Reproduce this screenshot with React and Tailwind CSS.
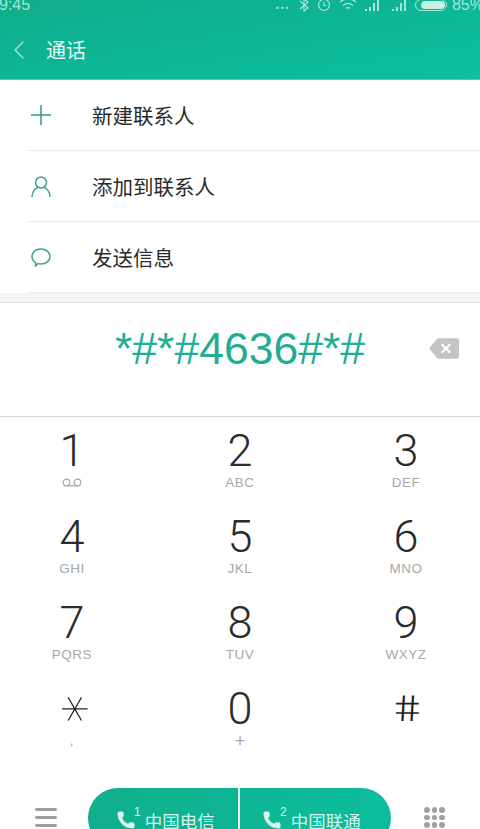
import React from 'react';
import { ChevronLeft, Phone } from 'lucide-react';

const cjk = 'font-["Noto_Sans_CJK_SC",sans-serif]';

function PlusIcon() {
  return (
    <svg width="20" height="20" viewBox="0 0 20 20" fill="none" stroke="#2f9a85" strokeWidth="1.5">
      <path d="M10 0v20M0 10h20" />
    </svg>
  );
}

function PersonIcon() {
  return (
    <svg width="20" height="21" viewBox="0 0 20 21" fill="none" stroke="#3fa28e" strokeWidth="1.5">
      <circle cx="10" cy="6.5" r="5.5" />
      <path d="M1 21c0-5.5 3.5-9 6-9.5M19 21c0-5.5-3.5-9-6-9.5" />
    </svg>
  );
}

function BubbleIcon() {
  return (
    <svg width="20" height="19" viewBox="0 0 20 19" fill="none" stroke="#3fa28e" strokeWidth="1.5">
      <path d="M10 1c5 0 9 3 9 7.500s-4 7.500-9 7.500c-1 0-2-.1-3-.4L4.500 18l.2-3.300C2.500 13.300 1 11.100 1 8.500 1 4 5 1 10 1z" />
    </svg>
  );
}

const menu = [
  { id: 'new', label: '新建联系人', Icon: PlusIcon },
  { id: 'add', label: '添加到联系人', Icon: PersonIcon },
  { id: 'msg', label: '发送信息', Icon: BubbleIcon },
];

const keys = [
  { n: '1', sub: 'vm' },
  { n: '2', sub: 'ABC' },
  { n: '3', sub: 'DEF' },
  { n: '4', sub: 'GHI' },
  { n: '5', sub: 'JKL' },
  { n: '6', sub: 'MNO' },
  { n: '7', sub: 'PQRS' },
  { n: '8', sub: 'TUV' },
  { n: '9', sub: 'WXYZ' },
  { n: '*', sub: ',' },
  { n: '0', sub: '+' },
  { n: '#', sub: '' },
];

function Voicemail() {
  return (
    <svg width="22" height="10" viewBox="0 0 22 10" fill="none" stroke="#a8a8a8" strokeWidth="1.2">
      <circle cx="5.5" cy="4.5" r="3.3" />
      <circle cx="16.5" cy="4.5" r="3.3" />
      <path d="M5.5 7.800h11" />
    </svg>
  );
}

function StatusIcons() {
  return (
    <div className="flex items-center text-[#a5e6d5]">
      <span className="text-[14px] leading-none font-bold tracking-[1px] mt-[-2px]">...</span>
      <svg width="10" height="14" viewBox="0 0 10 14" fill="none" stroke="currentColor" strokeWidth="1.2" className="ml-[9px]">
        <path d="M1 3l8 7-4 3V1l4 3-8 7" />
      </svg>
      <svg width="14" height="14" viewBox="0 0 14 14" fill="none" stroke="currentColor" strokeWidth="1.2" className="ml-[8px]">
        <circle cx="7" cy="7" r="5.5" />
        <path d="M7 4v3.500h2.500" />
      </svg>
      <svg width="18" height="14" viewBox="0 0 18 14" fill="none" stroke="currentColor" strokeWidth="1.3" className="ml-[8px]">
        <path d="M1 4c4-4 12-4 16 0M4 7.500c3-2.500 7-2.500 10 0M7 10.500c1-1 3-1 4 0" />
      </svg>
      <svg width="15" height="12" viewBox="0 0 15 12" fill="currentColor" className="ml-[8px]">
        <path d="M0 10h2v2H0zM4 8h2v4H4zM8 4h2v8H8zM12 1h2v11h-2z" />
      </svg>
      <svg width="15" height="12" viewBox="0 0 15 12" fill="currentColor" className="ml-[12px]">
        <path d="M0 10h2v2H0zM4 8h2v4H4zM8 4h2v8H8zM12 1h2v11h-2z" />
      </svg>
      <div className="ml-[8px] w-[32px] h-[12px] rounded-full border border-[#a5e6d5] p-[1px] pl-[5px]">
        <div className="h-full rounded-full bg-[#c8f0e5]" />
      </div>
      <span className="ml-[5px] text-[16px] leading-none">85%</span>
    </div>
  );
}

export default function App() {
  return (
    <div className='w-[480px] h-[829px] overflow-hidden bg-white font-["Liberation_Sans",sans-serif]'>
      <header className="h-[80px] bg-gradient-to-br from-[#10ac8a] via-[#0cb696] to-[#0cc0a0] border-b border-[#4fcdb5]">
        <div className="flex items-center justify-between h-[10px] text-[#a5e6d5] w-[485px] ml-[-1px]">
          <span className="text-[16px] leading-none">9:45</span>
          <StatusIcons />
        </div>
        <div className="flex items-center mt-[24px] pl-[3px]">
          <ChevronLeft size={32} strokeWidth={1} className="text-[#a5e6d5]" />
          <span className={`ml-[11px] text-[20px] leading-[24px] text-[#e4f8f3] ${cjk}`}>通话</span>
        </div>
      </header>

      <ul className="h-[213px]">
        {menu.map(({ id, label, Icon }) => (
          <li key={id} className="flex h-[71px] pl-[27px]">
            <div className="flex items-center flex-1 border-b border-[#ececec] pl-[4px]">
              <div className="w-[20px] flex justify-center">
                <Icon />
              </div>
              <span className={`ml-[41px] text-[20.5px] text-[#2a2a2a] ${cjk}`}>{label}</span>
            </div>
          </li>
        ))}
      </ul>

      <div className="h-[10px] bg-[#f5f5f5] border-b border-[#dedede]" />

      <div className="relative h-[114px] border-b border-[#d8d8d8] flex items-center justify-center">
        <span className="text-[44.5px] leading-none text-[#1fae93] mb-[20px]">*#*#4636#*#</span>
        <svg width="30" height="21" viewBox="0 0 31 21" className="absolute right-[21px] top-[35px]">
          <path d="M9 0h20a2 2 0 0 1 2 2v17a2 2 0 0 1-2 2H9L0 10.500z" fill="#c4c4c4" />
          <path d="M13 6l9 9M22 6l-9 9" stroke="#fff" strokeWidth="2.2" />
        </svg>
      </div>

      <div className="grid grid-cols-[144px_192px_140px] pt-[10px]">
        {keys.map((k) => (
          <div key={k.n} className="h-[86px] flex flex-col items-center">
            {k.n === '*' ? (
              <span className="h-[48px] text-[56px] leading-[48px] text-[#1f1f1f] font-['DejaVu_Sans',sans-serif] font-extralight rotate-90 -translate-x-[7px]">*</span>
            ) : k.n === '#' ? (
              <span className="h-[48px] text-[36px] leading-[48px] text-[#1f1f1f] font-['Roboto',sans-serif] font-light skew-x-[8deg] scale-x-[1.25]">#</span>
            ) : (
              <span className="h-[48px] text-[45px] leading-[48px] text-[#2b2b2b] font-['Roboto',sans-serif] font-light">{k.n}</span>
            )}
            <span className={`h-[16px] flex items-center leading-none text-[#a8a8a8] ${k.sub === '+' ? 'text-[18px]' : 'text-[13.5px] tracking-[0.5px]'}`}>
              {k.sub === 'vm' ? <Voicemail /> : k.sub}
            </span>
          </div>
        ))}
      </div>

      <div className="flex items-start mt-[17px] pl-[35px]">
        <div className="flex flex-col gap-[5px] w-[22px] mt-[20px]">
          <div className="h-[3px] bg-[#9e9e9e] rounded-full" />
          <div className="h-[3px] bg-[#9e9e9e] rounded-full" />
          <div className="h-[3px] bg-[#9e9e9e] rounded-full" />
        </div>
        <div className="flex h-[60px] w-[303px] ml-[31px] rounded-full overflow-hidden bg-gradient-to-r from-[#10ae8c] to-[#0cbd9d] text-[#d6f5ec]">
          {['中国电信', '中国联通'].map((name, i) => (
            <div key={name} className={`shrink-0 flex items-start pt-[21px] ${i === 1 ? 'w-[153px] border-l-2 border-[#e6f7f2] pl-[22px]' : 'w-[150px] pl-[28px]'}`}>
              <Phone size={20} fill="currentColor" strokeWidth={0.5} className="mt-[1px] shrink-0" />
              <span className="text-[12px] leading-none -mt-[3px] -ml-[2px]">{i + 1}</span>
              <span className={`ml-[4px] text-[17.5px] leading-[24px] whitespace-nowrap ${cjk}`}>{name}</span>
            </div>
          ))}
        </div>
        <div className="grid grid-cols-3 gap-[2px] mt-[19px] ml-[33px]">
          {Array.from({ length: 12 }).map((_, i) => (
            <div key={i} className="w-[5.5px] h-[5.5px] rounded-full bg-[#a0a0a0]" />
          ))}
        </div>
      </div>
    </div>
  );
}
